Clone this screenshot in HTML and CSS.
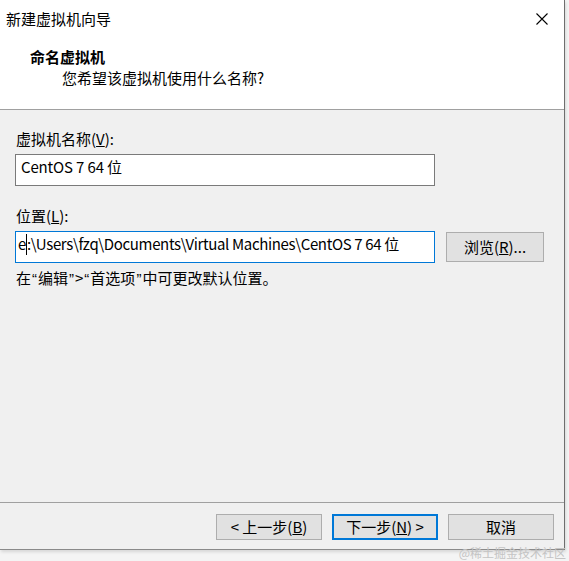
FILE: index.html
```html
<!DOCTYPE html>
<html>
    <head>
        <title>新建虚拟机向导</title>
        <meta charset="UTF-8">
        <meta name="viewport" content="width=device-width, initial-scale=1.0">
        <link rel="stylesheet" href="styles.css">
    </head>
    <body>
        <div class="window">
            <div class="header">
                <div class="titlebar">
                    <span class="title">新建虚拟机向导</span>
                    <svg class="close" width="12" height="12" viewBox="0 0 12 12">
                        <path d="M0.5 0.5 L11.5 11.5 M11.5 0.5 L0.5 11.5" stroke="#000" stroke-width="1.1" fill="none"/>
                    </svg>
                </div>
                <div class="heading">命名虚拟机</div>
                <div class="subheading">您希望该虚拟机使用什么名称?</div>
            </div>

            <div class="content">
                <div class="label">虚拟机名称(<u>V</u>):</div>
                <div class="field name-field">CentOS 7 64 位</div>

                <div class="label location-label">位置(<u>L</u>):</div>
                <div class="row">
                    <div class="field focused">e<span class="caret"></span>:\Users\fzq\Documents\Virtual Machines\CentOS 7 64 位</div>
                    <div class="button browse">浏览(<u>R</u>)...</div>
                </div>
                <div class="hint">在<span class="quote">“</span>编辑<span class="quote">”</span>&gt;<span class="quote">“</span>首选项<span class="quote">”</span>中可更改默认位置。</div>
            </div>

            <div class="footer">
                <div class="button">&lt; 上一步(<u>B</u>)</div>
                <div class="button default">下一步(<u>N</u>) &gt;</div>
                <div class="button">取消</div>
            </div>
        </div>
        <div class="watermark">@稀土掘金技术社区</div>
    </body>
</html>
```

FILE: styles.css
```css
body{
    margin: 0px;
    background-color: #f4f4f4;
    font-family: "Noto Sans CJK SC", sans-serif;
    font-size: 15px;
    color: #000;
    height: 561px;
    overflow: hidden;
    position: relative;
}
.window{
    width: 564px;
    height: 549px;
    border-right: 1px solid #6e6e6e;
    border-bottom: 1px solid #8a8a8a;
    background-color: #f0f0f0;
    display: flex;
    flex-direction: column;
    box-shadow: 1px 2px 3px rgba(0,0,0,0.12);
}
.header{
    background-color: #fff;
    height: 110px;
    border-bottom: 1px solid #a0a0a0;
    box-sizing: border-box;
}
.titlebar{
    height: 38px;
    display: flex;
    align-items: center;
    justify-content: space-between;
    padding: 0px 16px 0px 6px;
}
.title{
    line-height: 20px;
}
.heading{
    font-weight: bold;
    padding-left: 30px;
    margin-top: 8px;
    line-height: 22px;
}
.subheading{
    padding-left: 62px;
    line-height: 20px;
}
.content{
    flex: 1;
    padding: 19px 20px 0px 15px;
}
.label{
    padding-left: 1px;
    line-height: 20px;
    margin-bottom: 5px;
}
.location-label{
    margin-top: 20px;
}
.field{
    background-color: #fff;
    border: 1px solid #7a7a7a;
    height: 30px;
    line-height: 24px;
    padding: 0px 5px;
    white-space: nowrap;
    overflow: hidden;
    width: 408px;
    letter-spacing: -0.15px;
}
.focused{
    border-color: #0078d7;
    padding-left: 2px;
    width: 411px;
    letter-spacing: -0.35px;
}
.caret{
    display: inline-block;
    width: 1px;
    height: 21px;
    background-color: #000;
    vertical-align: -5px;
}
.row{
    display: flex;
    align-items: center;
    gap: 11px;
}
.hint{
    padding-left: 1px;
    margin-top: 5px;
    line-height: 20px;
}
.quote{
    font-family: "Liberation Sans", sans-serif;
    padding: 0px 1px;
}
.button{
    width: 104px;
    height: 24px;
    line-height: 24px;
    text-align: center;
    background-color: #e1e1e1;
    border: 1px solid #adadad;
}
.browse{
    width: 96px;
    height: 28px;
    line-height: 28px;
}
.default{
    border: 2px solid #0078d7;
    width: 102px;
    height: 22px;
    line-height: 22px;
}
.footer{
    height: 47px;
    border-top: 1px solid #a0a0a0;
    box-sizing: border-box;
    display: flex;
    justify-content: flex-end;
    align-items: flex-start;
    gap: 10px;
    padding: 11px 10px 0px 0px;
}
.watermark{
    position: absolute;
    right: 3px;
    bottom: 1px;
    font-size: 12px;
    color: #c4c4c4;
    line-height: 14px;
}
```
